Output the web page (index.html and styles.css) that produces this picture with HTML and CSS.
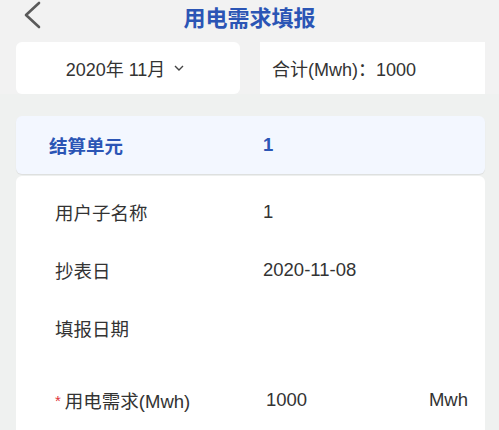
FILE: index.html
```html
<!DOCTYPE html>
<html lang="zh-CN">
<head>
<meta charset="utf-8">
<title>用电需求填报</title>
<link rel="stylesheet" href="styles.css">
</head>
<body>
<div class="page">
  <header class="header">
    <svg class="back" width="20" height="30" viewBox="0 0 20 30"><polyline points="15,3 2,15 15,27" fill="none" stroke="#5a5a5a" stroke-width="2.6" stroke-linecap="round" stroke-linejoin="round"/></svg>
    <h1 class="title">用电需求填报</h1>
  </header>
  <div class="toprow">
    <div class="card date-card">
      <span>2020年 11月</span>
      <svg class="caret" width="10" height="7" viewBox="0 0 10 7"><polyline points="1,1 5,5 9,1" fill="none" stroke="#444" stroke-width="1.4"/></svg>
    </div>
    <div class="card sum-card">合计(Mwh)：1000</div>
  </div>
  <div class="unit-row">
    <span class="label">结算单元</span>
    <span class="value">1</span>
  </div>
  <div class="detail">
    <div class="row"><span class="label">用户子名称</span><span class="value">1</span></div>
    <div class="row"><span class="label">抄表日</span><span class="value">2020-11-08</span></div>
    <div class="row"><span class="label">填报日期</span><span class="value"></span></div>
    <div class="row input-row"><span class="label"><i class="star">*</i>用电需求(Mwh)</span><span class="value input">1000</span><span class="unit">Mwh</span></div>
  </div>
</div>
</body>
</html>
```
FILE: styles.css
```css
* { box-sizing: border-box; }
html, body { margin: 0; padding: 0; }
body {
  background: #eff1f0;
  font-family: "Liberation Sans", "Noto Sans CJK SC", sans-serif;
  color: #333;
  width: 499px;
  height: 430px;
  overflow: hidden;
}
.page { width: 499px; }
.header {
  height: 32px;
  background: #f2f2f2;
  position: relative;
  display: flex;
  align-items: center;
  justify-content: center;
}
.back { position: absolute; left: 24px; top: 0; }
.title {
  margin: 0;
  font-size: 22px;
  font-weight: 700;
  color: #2b55b5;
  line-height: 30px;
  font-family: "Noto Sans CJK SC", sans-serif;
}
.toprow {
  display: flex;
  gap: 20px;
  padding: 10px 14px 0 16px;
  background: #f2f2f2;
}
.card {
  background: #fff;
  height: 52px;
  display: flex;
  align-items: center;
  font-size: 18px;
  color: #333;
}
.date-card {
  width: 224px;
  border-radius: 6px;
  justify-content: center;
  gap: 9px;
  padding-right: 6px;
}
.caret { margin-top: 1px; }
.sum-card {
  width: 225px;
  padding-left: 12px;
}
.unit-row {
  margin: 22px 14px 0 16px;
  height: 58px;
  background: #f3f7ff;
  border-radius: 6px;
  box-shadow: 0 1px 1px rgba(0,0,0,0.08);
  display: flex;
  align-items: center;
  padding-left: 33px;
  font-size: 18.5px;
  font-weight: 600;
  color: #2b55b5;
}
.unit-row .label { width: 214px; }
.detail {
  margin: 2px 14px 0 16px;
  background: #fff;
  border-radius: 6px 6px 0 0;
  padding: 7px 17px 0 39px;
  height: 260px;
}
.row {
  display: flex;
  align-items: center;
  height: 58px;
  font-size: 18.5px;
  color: #333;
}
.row .label { width: 208px; flex: none; }
.row .value { flex: 1; }
.input-row { margin-top: 14px; }
.input { padding-left: 3px; }
.star {
  font-style: normal;
  color: #e0333a;
  font-size: 15px;
  margin-right: 4px;
  position: relative;
  top: -2px;
}
.unit { flex: none; }
```
